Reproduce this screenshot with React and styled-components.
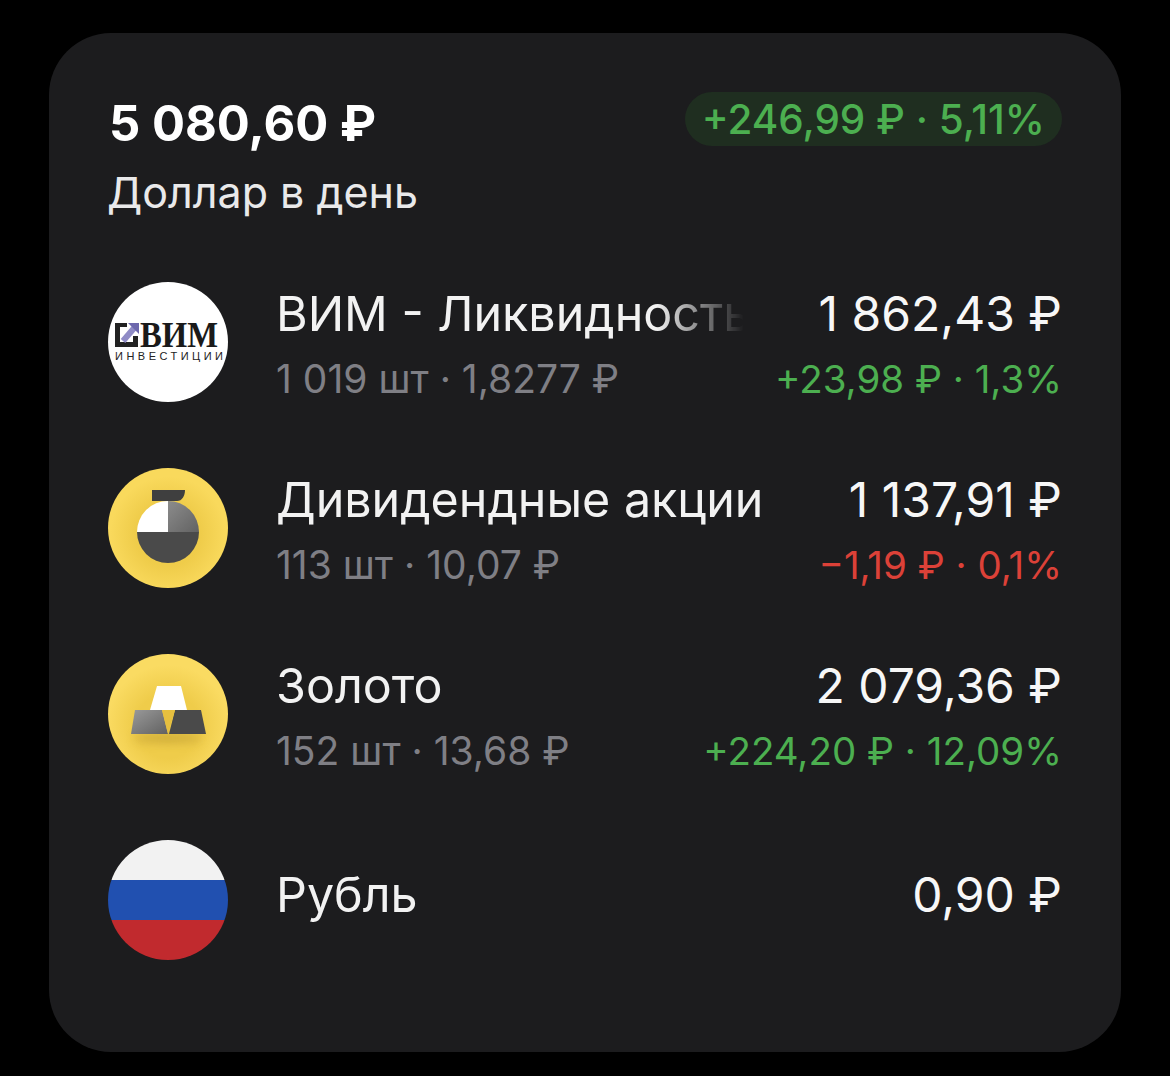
import React from 'react';
import styled, { createGlobalStyle } from 'styled-components';

const GlobalStyle = createGlobalStyle`
  html, body {
    margin: 0;
    padding: 0;
    background: #000;
    font-family: 'Inter', 'Noto Sans', sans-serif;
  }
`;

const Page = styled.div`
  width: 1170px;
  height: 1076px;
  padding: 33px 49px 24px;
  box-sizing: border-box;
  background: #000;
`;

const Card = styled.div`
  height: 1019px;
  box-sizing: border-box;
  padding: 61px 59px 0 59px;
  background: #1c1c1e;
  border-radius: 62px;
`;

const Header = styled.div`
  display: flex;
  justify-content: space-between;
  align-items: flex-start;
`;

const Total = styled.div`
  font-size: 49px;
  line-height: 56px;
  font-weight: 700;
  color: #fff;
  margin: 2px 0 0 1px;
`;

const Subtitle = styled.div`
  font-size: 43px;
  line-height: 48px;
  color: #e9e9ea;
  margin: 16px 0 0 -1px;
`;

const Badge = styled.div`
  height: 54px;
  padding: 0 17px;
  margin-top: -2px;
  border-radius: 27px;
  display: flex;
  align-items: center;
  background: #1f2e20;
  color: #4caf50;
  font-size: 40.4px;
  font-weight: 500;
  white-space: nowrap;
`;

const List = styled.div`
  display: flex;
  flex-direction: column;
  gap: 66px;
  margin-top: 66px;
`;

const Row = styled.div`
  display: flex;
  align-items: center;
  height: 120px;
`;

const Avatar = styled.div`
  flex: none;
  width: 120px;
  height: 120px;
  border-radius: 50%;
  overflow: hidden;
  svg {
    display: block;
  }
`;

const Info = styled.div`
  flex: 1;
  min-width: 0;
  margin-left: 48px;
  padding: ${(p) => (p.$single ? '0 0 10px' : '5px 0 0')};
  display: flex;
  flex-direction: column;
  gap: 13px;
`;

const Line = styled.div`
  display: flex;
  justify-content: space-between;
  align-items: center;
  gap: 24px;
  white-space: nowrap;
`;

const Name = styled.div`
  font-size: 48.4px;
  line-height: 56px;
  color: #f2f2f2;
  ${(p) => p.$fade && `
    width: 470px;
    overflow: hidden;
    -webkit-mask-image: linear-gradient(to right, #000 380px, transparent 468px);
    mask-image: linear-gradient(to right, #000 380px, transparent 468px);
  `}
`;

const Amount = styled.div`
  font-size: 48px;
  line-height: 56px;
  color: #f7f7f7;
`;

const Meta = styled.div`
  font-size: 39px;
  line-height: 48px;
  color: #7f7f85;
`;

const Change = styled.div`
  font-size: 38.5px;
  line-height: 48px;
  color: ${(p) => (p.$down ? '#dc4138' : '#4caf50')};
`;

const VimLogo = () => (
  <svg width="120" height="120" viewBox="0 0 120 120">
    <rect width="120" height="120" fill="#fff" />
    <path d="M7 41 H19 V45 H12 V60 H25 V54 H30 V65 H7 Z" fill="#222" />
    <path d="M15 59 L27 45" stroke="#8f8bc6" strokeWidth="6" fill="none" />
    <path d="M20 41 H31 V52 Z" fill="#6d68ad" />
    <text x="32" y="65" fontFamily="'Liberation Serif', serif" fontWeight="700" fontSize="36" fill="#1a1a1a" textLength="78" lengthAdjust="spacingAndGlyphs">ВИМ</text>
    <text x="7" y="78" fontFamily="'Liberation Sans', sans-serif" fontSize="11" fill="#222" textLength="108" lengthAdjust="spacing">ИНВЕСТИЦИИ</text>
  </svg>
);

const DividendIcon = () => (
  <svg width="120" height="120" viewBox="0 0 120 120">
    <defs>
      <radialGradient id="divBg" cx="0.5" cy="0.55" r="0.6">
        <stop offset="0.45" stop-color="#efcc4a" />
        <stop offset="0.8" stop-color="#f9d95c" />
      </radialGradient>
      <linearGradient id="divGrey" x1="0" y1="0" x2="1" y2="1">
        <stop offset="0" stop-color="#8c8c8c" />
        <stop offset="1" stop-color="#626262" />
      </linearGradient>
    </defs>
    <rect width="120" height="120" fill="url(#divBg)" />
    <path d="M44 22 H77 C77 28 74 33 69 33 H44 Z" fill="#3f3f3f" />
    <path d="M60 33 A31 31 0 0 0 29 64 H60 Z" fill="#fff" />
    <path d="M60 33 A31 31 0 0 1 91 64 H60 Z" fill="url(#divGrey)" />
    <path d="M29 64 A31 31 0 0 0 91 64 Z" fill="#4a4a4a" />
  </svg>
);

const GoldIcon = () => (
  <svg width="120" height="120" viewBox="0 0 120 120">
    <defs>
      <radialGradient id="goldBg" cx="0.5" cy="0.6" r="0.6">
        <stop offset="0.45" stop-color="#efcc4a" />
        <stop offset="0.85" stop-color="#fadb62" />
      </radialGradient>
      <linearGradient id="goldGrey" x1="0" y1="0" x2="1" y2="1">
        <stop offset="0" stop-color="#9a9a9a" />
        <stop offset="1" stop-color="#616161" />
      </linearGradient>
      <filter id="goldBlur" x="-30%" y="-100%" width="160%" height="300%">
        <feGaussianBlur stdDeviation="5" />
      </filter>
    </defs>
    <rect width="120" height="120" fill="url(#goldBg)" />
    <ellipse cx="60" cy="84" rx="34" ry="5" fill="#b08f2c" opacity="0.5" filter="url(#goldBlur)" />
    <path d="M49 32 H73 L79 56 H42 Z" fill="#fff" />
    <path d="M27 56 H54 L60 80 H23 Z" fill="url(#goldGrey)" />
    <path d="M67 56 H93 L98 80 H61 Z" fill="#4a4a4a" />
    <path d="M54 56 H67 L60 80 Z" fill="#e6bf3f" />
  </svg>
);

const FlagIcon = () => (
  <svg width="120" height="120" viewBox="0 0 120 120">
    <rect width="120" height="40" fill="#f2f2f2" />
    <rect y="40" width="120" height="40" fill="#2150b0" />
    <rect y="80" width="120" height="40" fill="#c12a2e" />
  </svg>
);

const rows = [
  {
    icon: <VimLogo />,
    name: 'ВИМ - Ликвидность',
    fade: true,
    amount: '1 862,43 ₽',
    meta: '1 019 шт · 1,8277 ₽',
    change: '+23,98 ₽ · 1,3%',
  },
  {
    icon: <DividendIcon />,
    name: 'Дивидендные акции',
    amount: '1 137,91 ₽',
    meta: '113 шт · 10,07 ₽',
    change: '−1,19 ₽ · 0,1%',
    down: true,
  },
  {
    icon: <GoldIcon />,
    name: 'Золото',
    amount: '2 079,36 ₽',
    meta: '152 шт · 13,68 ₽',
    change: '+224,20 ₽ · 12,09%',
  },
  {
    icon: <FlagIcon />,
    name: 'Рубль',
    amount: '0,90 ₽',
  },
];

const App = () => (
  <Page>
    <GlobalStyle />
    <Card>
      <Header>
        <div>
          <Total>5 080,60 ₽</Total>
          <Subtitle>Доллар в день</Subtitle>
        </div>
        <Badge>+246,99 ₽ · 5,11%</Badge>
      </Header>
      <List>
        {rows.map((row) => (
          <Row key={row.name}>
            <Avatar>{row.icon}</Avatar>
            <Info $single={!row.meta}>
              <Line>
                <Name $fade={row.fade}>{row.name}</Name>
                <Amount>{row.amount}</Amount>
              </Line>
              {row.meta && (
                <Line>
                  <Meta>{row.meta}</Meta>
                  <Change $down={row.down}>{row.change}</Change>
                </Line>
              )}
            </Info>
          </Row>
        ))}
      </List>
    </Card>
  </Page>
);

export default App;
